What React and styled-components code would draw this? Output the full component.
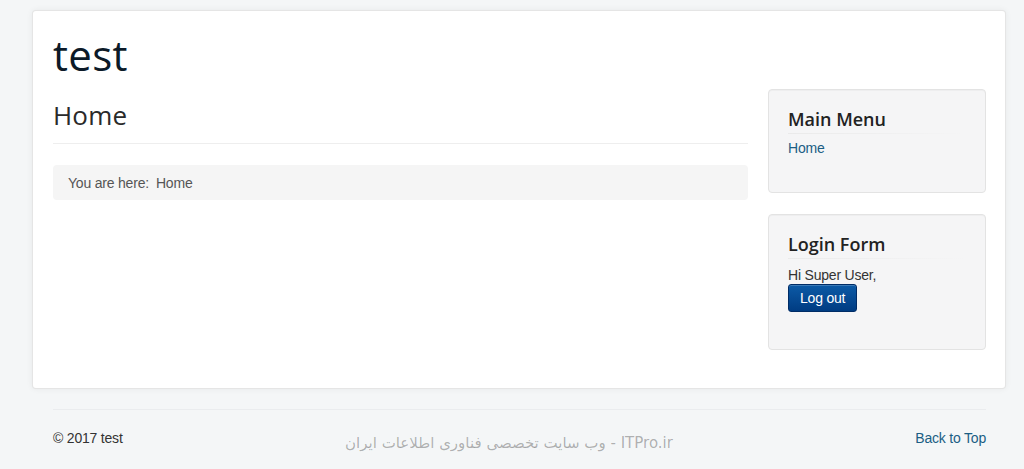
import React from "react";
import styled, { createGlobalStyle } from "styled-components";

const GlobalStyle = createGlobalStyle`
  html, body {
    margin: 0;
    padding: 0;
    background: #f4f6f7;
    font-family: "Liberation Sans", Arial, sans-serif;
    font-size: 14px;
    color: #333;
  }
`;

const Page = styled.div`
  position: relative;
  padding: 10px 18px 0 32px;
  height: 469px;
  box-sizing: border-box;
`;

const Card = styled.div`
  background: #fff;
  border: 1px solid rgba(0, 0, 0, 0.1);
  border-radius: 4px;
  box-shadow: 0 0 6px rgba(0, 0, 0, 0.06);
  padding: 20px 19px 25px 20px;
  height: 379px;
  box-sizing: border-box;
`;

const SiteTitle = styled.div`
  font-family: "Open Sans", sans-serif;
  font-size: 42px;
  line-height: 48px;
  color: #0c1a28;
  height: 58px;
  letter-spacing: 0.3px;
`;

const Row = styled.div`
  display: flex;
  gap: 20px;
`;

const Main = styled.main`
  flex: 1;
`;

const PageHeader = styled.div`
  border-bottom: 1px solid #eee;
  padding-bottom: 10px;
  margin-top: 8px;
`;

const H2 = styled.h2`
  margin: 0;
  font-family: "Open Sans", sans-serif;
  font-weight: 400;
  font-size: 26px;
  line-height: 36px;
  color: #2a2a2a;
  letter-spacing: 0.2px;
`;

const Breadcrumb = styled.div`
  margin-top: 21px;
  background: #f5f5f5;
  border-radius: 4px;
  height: 35px;
  display: flex;
  align-items: center;
  padding: 0 15px;
  color: #555;
  gap: 7px;
  letter-spacing: -0.2px;
`;

const Sidebar = styled.aside`
  width: 218px;
  display: flex;
  flex-direction: column;
  gap: 21px;
`;

const Well = styled.div`
  background: #f5f5f6;
  border: 1px solid #e3e3e3;
  border-radius: 4px;
  box-shadow: inset 0 1px 1px rgba(0, 0, 0, 0.03);
  padding: 19px;
  height: ${(p) => p.$h}px;
  box-sizing: border-box;
`;

const WellTitle = styled.h3`
  margin: 0 0 6px;
  font-family: "Open Sans", sans-serif;
  font-weight: 600;
  font-size: 18px;
  line-height: 20px;
  padding: 0 0 4px;
  color: #222;
  border-bottom: 1px solid;
  border-image: linear-gradient(to right, #eaeaea, #f5f5f6) 1;
`;

const Link = styled.a`
  color: #1b5e84;
  text-decoration: none;
  font-size: 14px;
  letter-spacing: -0.2px;
`;

const Greeting = styled.div`
  margin-top: 8px;
  line-height: 17px;
  letter-spacing: -0.2px;
`;

const Button = styled.button`
  display: block;
  margin-top: 0;
  font-family: "Liberation Sans", Arial, sans-serif;
  font-size: 14px;
  letter-spacing: -0.2px;
  color: #fff;
  height: 28px;
  padding: 0 11px;
  border: 1px solid #002c66;
  border-radius: 3px;
  background: linear-gradient(#0c5aa6, #003c82);
  box-shadow: inset 0 1px 0 rgba(255, 255, 255, 0.2);
`;

const Footer = styled.footer`
  margin: 20px 20px 0 21px;
  border-top: 1px solid #eaecee;
  padding-top: 20px;
  display: flex;
  justify-content: space-between;
  color: #333;
  letter-spacing: -0.2px;
`;

const Watermark = styled.div`
  position: absolute;
  left: 0;
  right: 0;
  top: 434px;
  text-align: center;
  font-family: "DejaVu Sans", sans-serif;
  font-size: 15px;
  color: rgba(0, 0, 0, 0.3);
  direction: rtl;
  padding-right: 6px;
`;

export default function App() {
  return (
    <>
      <GlobalStyle />
      <Page>
        <Card>
          <SiteTitle>test</SiteTitle>
          <Row>
            <Main>
              <PageHeader>
                <H2>Home</H2>
              </PageHeader>
              <Breadcrumb>
                <span>You are here:</span>
                <span>Home</span>
              </Breadcrumb>
            </Main>
            <Sidebar>
              <Well $h={104}>
                <WellTitle>Main Menu</WellTitle>
                <Link href="#">Home</Link>
              </Well>
              <Well $h={136}>
                <WellTitle>Login Form</WellTitle>
                <Greeting>Hi Super User,</Greeting>
                <Button>Log out</Button>
              </Well>
            </Sidebar>
          </Row>
        </Card>
        <Footer>
          <span>© 2017 test</span>
          <Link href="#">Back to Top</Link>
        </Footer>
        <Watermark dir="rtl">ITPro.ir - وب سایت تخصصی فناوری اطلاعات ایران</Watermark>
      </Page>
    </>
  );
}
